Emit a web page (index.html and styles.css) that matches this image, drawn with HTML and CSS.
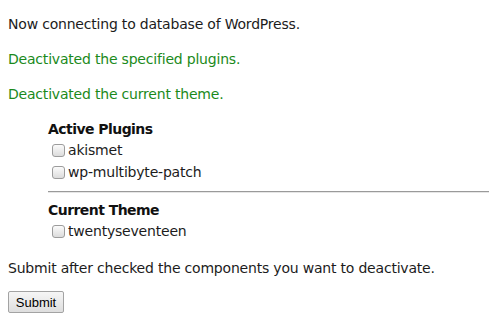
FILE: index.html
```html
<!DOCTYPE html>
<html lang="en">
<head>
  <meta charset="UTF-8" />
  <title>Deactivate components</title>
  <link rel="stylesheet" href="styles.css">
</head>
<body>

  <form class="page">
    <p class="msg">Now connecting to database of WordPress.</p>
    <p class="msg ok">Deactivated the specified plugins.</p>
    <p class="msg ok">Deactivated the current theme.</p>

    <!-- Components -->
    <div class="components">
      <h3>Active Plugins</h3>
      <label class="item"><input type="checkbox" name="plugins[]" value="akismet">akismet</label>
      <label class="item"><input type="checkbox" name="plugins[]" value="wp-multibyte-patch">wp-multibyte-patch</label>
      <hr>
      <h3>Current Theme</h3>
      <label class="item"><input type="checkbox" name="theme" value="twentyseventeen">twentyseventeen</label>
    </div>

    <p class="msg note">Submit after checked the components you want to deactivate.</p>
    <button type="submit">Submit</button>
  </form>

</body>
</html>
```

FILE: styles.css
```css
* {
  box-sizing: border-box;
}
body, html {
  margin: 0;
  padding: 0;
  background: #ffffff;
  color: #1c1c1c;
  font-family: 'DejaVu Sans', Verdana, sans-serif;
  font-size: 14px;
  letter-spacing: -0.2px;
}

.page {
  padding: 14px 8px 0 8px;
}

.msg {
  margin: 0 0 15px 0;
  line-height: 20px;
}

.ok {
  color: #1b8a1b;
}

.components {
  margin: 0 -8px 0 40px;
}

h3 {
  margin: 0;
  font-size: 14px;
  font-weight: bold;
  letter-spacing: -0.55px;
  line-height: 20px;
  color: #111;
}

.item {
  display: flex;
  align-items: center;
  height: 22px;
  line-height: 22px;
}

.item input {
  appearance: none;
  -webkit-appearance: none;
  width: 13px;
  height: 13px;
  margin: 0 3px 0 4px;
  border: 1px solid #9c9c9c;
  border-radius: 3px;
  background: linear-gradient(#fbfbfb, #dcdcdc);
}

hr {
  margin: 8px 0 7px 0;
  border: 0;
  border-top: 1px solid #9a9a9a;
  border-bottom: 1px solid #e6e6e6;
  height: 0;
}

.note {
  margin-top: 16px;
  margin-bottom: 13px;
}

button {
  font-family: 'Liberation Sans', Arial, sans-serif;
  font-size: 13px;
  letter-spacing: 0;
  color: #000;
  width: 56px;
  height: 22px;
  padding: 0;
  border: 1px solid #a3a3a3;
  border-radius: 2px;
  background: linear-gradient(#f6f6f6, #dedede);
}
```
